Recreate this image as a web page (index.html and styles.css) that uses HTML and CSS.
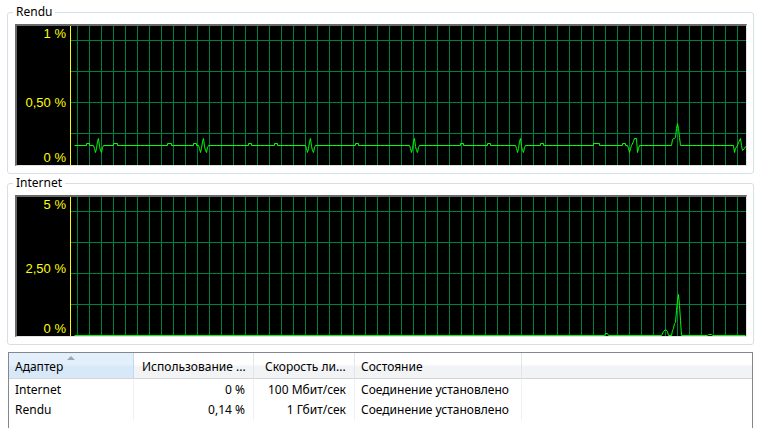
FILE: index.html
```html
<!DOCTYPE html>
<html lang="ru">
<head>
    <meta charset="UTF-8">
    <meta name="viewport" content="width=device-width, initial-scale=1.0">
    <title>Сеть</title>
    <link rel="stylesheet" href="styles.css">
</head>
<body>
    <fieldset class="group">
        <legend>Rendu</legend>
        <div class="chart">
            <div class="scale">
                <span class="tick">1 %</span>
                <span class="tick mid">0,50 %</span>
                <span class="tick low">0 %</span>
            </div>
            <svg class="plot" width="675" height="139" viewBox="71 26 675 139">
                <rect x="71" y="40" width="675" height="1" class="gridline"/>
                <rect x="71" y="71" width="675" height="1" class="gridline"/>
                <rect x="71" y="102" width="675" height="1" class="gridline"/>
                <rect x="71" y="133" width="675" height="1" class="gridline"/>
                <!-- Rendu traffic -->
                <g transform="translate(0.5 0.5)">
                    <polyline class="trace" points="74,145 86,145 86,143 89,143 89,145 93,145 94,148 95,152 96,148 97,141 98,138 99,146 100,150 101,152 102,147 103,145 113,145 113,143 117,143 117,145 167,145 167,143 171,143 171,145 193,145 193,143 196,143 196,145 198,145 199,148 200,152 201,148 202,141 203,138 204,146 205,150 206,152 207,147 208,145 248,145 248,143 251,143 251,145 274,145 274,143 277,143 277,145 305,145 306,148 307,152 308,148 309,141 310,138 311,146 312,150 313,152 314,147 315,145 355,145 355,143 358,143 358,145 409,145 410,148 411,152 412,148 413,141 414,138 415,146 416,150 417,152 418,147 419,145 460,145 460,143 463,143 463,145 487,145 487,143 490,143 490,145 515,145 516,148 517,152 518,148 519,141 520,138 521,146 522,150 523,152 524,147 525,145 540,145 540,143 543,143 543,145 593,145 593,143 599,143 599,145 622,145 622,143 625,143 625,145 627,145 628,148 629,152 630,148 631,145 633,141 634,138 636,138 637,152 638,148 639,145 671,145 672,139 675,137 676,128 677,123 678,128 679,137 680,145 733,145 734,152 735,148 737,145 738,142 740,138 741,145 742,150 744,148 745,146"/>
                </g>
            </svg>
        </div>
    </fieldset>

    <fieldset class="group">
        <legend>Internet</legend>
        <div class="chart">
            <div class="scale">
                <span class="tick">5 %</span>
                <span class="tick mid">2,50 %</span>
                <span class="tick low">0 %</span>
            </div>
            <svg class="plot" width="675" height="139" viewBox="71 197 675 139">
                <rect x="71" y="211" width="675" height="1" class="gridline"/>
                <rect x="71" y="242" width="675" height="1" class="gridline"/>
                <rect x="71" y="273" width="675" height="1" class="gridline"/>
                <rect x="71" y="304" width="675" height="1" class="gridline"/>
                <!-- Internet traffic -->
                <g transform="translate(0.5 0.5)">
                    <polyline class="trace" points="74,335 604,335 605,333 607,333 608,335 661,335 663,331 665,329 667,331 668,335 671,335 672,330 673,328 674,323 675,322 676,310 677,300 678,294 679,305 680,320 681,335 707,335 708,334 711,334 712,335 745,335"/>
                </g>
            </svg>
        </div>
    </fieldset>

    <div class="list">
        <table>
            <colgroup>
                <col class="col-name">
                <col class="col-use">
                <col class="col-speed">
                <col class="col-state">
                <col>
            </colgroup>
            <thead>
                <tr>
                    <th class="sorted">Адаптер</th>
                    <th class="h-use">Использование ...</th>
                    <th class="h-speed">Скорость ли...</th>
                    <th>Состояние</th>
                    <th class="last"></th>
                </tr>
            </thead>
            <tbody>
                <tr>
                    <td>Internet</td>
                    <td class="num">0 %</td>
                    <td class="num">100 Мбит/сек</td>
                    <td>Соединение установлено</td>
                    <td class="last"></td>
                </tr>
                <tr>
                    <td>Rendu</td>
                    <td class="num">0,14 %</td>
                    <td class="num">1 Гбит/сек</td>
                    <td>Соединение установлено</td>
                    <td class="last"></td>
                </tr>
            </tbody>
        </table>
    </div>
</body>
</html>
```

FILE: styles.css
```css
body {
    margin: 0;
    padding-top: 4px;
    background: #fff;
    color: #000;
    font-family: "Noto Sans", "Liberation Sans", sans-serif;
    font-size: 12px;
    overflow: hidden;
}

/* group boxes */
.group {
    margin: 0 6px 0 7px;
    padding: 0 6px 7px 7px;
    border: 1px solid #d5dfe5;
    border-radius: 3px;
    min-width: 0;
}
.group + .group {
    margin-top: 1px;
}
.group legend {
    margin-left: -2px;
    padding: 0 3px;
    font-size: 12px;
    line-height: 16px;
}

/* charts */
.chart {
    display: flex;
    margin-top: 4px;
    height: 139px;
    background: #000;
    border-style: solid;
    border-width: 2px 1px 1px 2px;
    border-color: #696969 #e3e3e3 #e3e3e3 #696969;
}
.scale {
    display: flex;
    flex-direction: column;
    width: 49px;
    padding-right: 4px;
    border-right: 1px solid #ffff00;
    color: #ffff00;
    font-family: "Liberation Sans", sans-serif;
    font-size: 13px;
    line-height: 15px;
    text-align: right;
}
.scale .mid {
    margin-top: 54px;
}
.scale .low {
    margin-top: 40px;
}
.group + .group .scale .mid {
    margin-top: 49px;
}
.group + .group .scale .low {
    margin-top: 45px;
}
.plot {
    display: block;
    background-color: #000;
    background-image: linear-gradient(to right, #008040 0, #008040 1px, transparent 1px);
    background-size: 12px 100%;
    background-position: 6px 0;
}
.gridline {
    fill: #008040;
}
.trace {
    fill: none;
    stroke: #00ff00;
    stroke-width: 1;
}

/* adapter list */
.list {
    margin: 7px 7px 0 8px;
    height: 90px;
    border: 1px solid #828790;
    background: #fff;
}
.list table {
    width: 100%;
    table-layout: fixed;
    border-collapse: separate;
    border-spacing: 0;
}
.col-name { width: 125px; }
.col-use { width: 120px; }
.col-speed { width: 101px; }
.col-state { width: 167px; }

.list th {
    position: relative;
    height: 16px;
    padding: 5px 0 3px 6px;
    font-weight: normal;
    text-align: left;
    white-space: nowrap;
    overflow: hidden;
    background: linear-gradient(#fff 0%, #fff 45%, #f2f3f5 55%, #f2f3f5 100%);
    border-right: 1px solid #e3e5ea;
    border-bottom: 1px solid #d5d5d5;
}
.list th.h-use {
    padding-left: 8px;
}
.list th.h-speed {
    padding-left: 11px;
}
.list th.sorted {
    background: linear-gradient(#e3f0fb 0%, #e3f0fb 45%, #d7e9f8 55%, #d7e9f8 100%);
    border-right-color: #c0d9ef;
}
.list th.sorted::before {
    content: "";
    position: absolute;
    top: 3px;
    left: 58px;
    border-left: 4px solid transparent;
    border-right: 4px solid transparent;
    border-bottom: 4px solid #98a8bc;
}
.list th.last {
    border-right: none;
}
.list tbody tr:first-child td {
    padding-top: 1px;
}
.list td {
    height: 20px;
    padding: 0 0 0 6px;
    line-height: 20px;
    white-space: nowrap;
    overflow: hidden;
    border-right: 1px solid #eef2f6;
}
.list td.num {
    padding-right: 8px;
    padding-left: 0;
    text-align: right;
}
.list td.last {
    border-right: none;
}
```
